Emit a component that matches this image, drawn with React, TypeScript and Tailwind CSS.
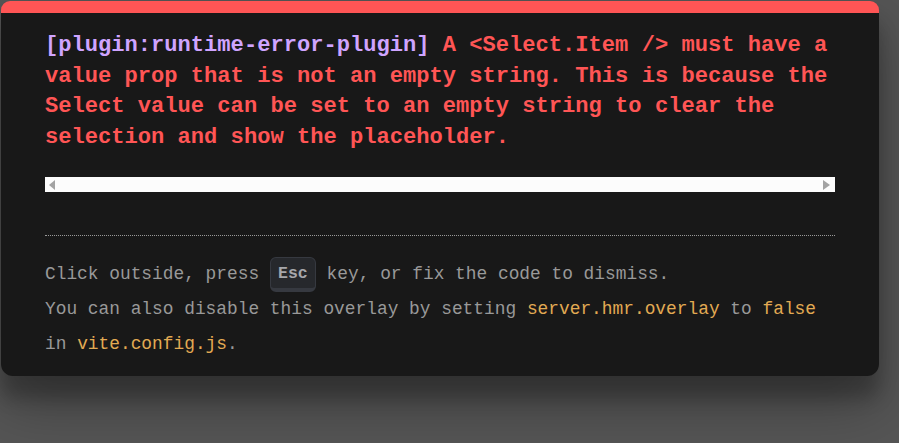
import React from "react";

const mono = "font-['Liberation_Mono','DejaVu_Sans_Mono',monospace]";

function Scrollbar() {
  return (
    <div className="mt-[24px] flex h-[15px] items-center justify-between bg-[#fcfcfc] pl-[4px] pr-[5px]">
      <svg width="6" height="10" viewBox="0 0 6 10">
        <path d="M6 0 L6 10 L0 5 Z" fill="#a3a3a3" />
      </svg>
      <svg width="7" height="10" viewBox="0 0 7 10">
        <path d="M0 0 L0 10 L7 5 Z" fill="#a3a3a3" />
      </svg>
    </div>
  );
}

export default function App() {
  const lines = [
    "A <Select.Item /> must have a",
    "value prop that is not an empty string. This is because the",
    "Select value can be set to an empty string to clear the",
    "selection and show the placeholder.",
  ];

  return (
    <div className="h-[443px] w-[899px] overflow-hidden bg-[#555555] pt-[1px]">
      <div
        className={`ml-[1px] w-[878px] overflow-hidden rounded-t-[9px] rounded-b-[12px] border-t-[12px] border-[#ff5555] bg-[#181818] px-[44px] pt-[18px] pb-[14px] text-[#d8d8d8] shadow-[0_28px_57px_rgba(0,0,0,0.3),0_22px_18px_rgba(0,0,0,0.22)] ${mono}`}
      >
        <pre className={`m-0 whitespace-pre text-[22.1px] font-bold leading-[30.5px] text-[#ff5555] ${mono}`}>
          <span className="text-[#cfa4ff]">[plugin:runtime-error-plugin]</span> {lines[0]}
          {"\n"}
          {lines[1]}
          {"\n"}
          {lines[2]}
          {"\n"}
          {lines[3]}
        </pre>

        <Scrollbar />

        <div className="mt-[43px] border-t border-dotted border-[#999999] pt-[21px] text-[17.85px] leading-[35px] text-[#999999]">
          <div className="whitespace-nowrap">
            Click outside, press{" "}
            <kbd
              className={`inline-flex h-[35px] w-[46px] items-center justify-center rounded-[6px] border-x-[1.5px] border-t-[1.5px] border-b-[4.5px] border-[#363940] bg-[#26282c] pt-[3px] align-middle text-[16.5px] font-bold leading-none text-[#a6a7ab] ${mono}`}
            >
              Esc
            </kbd>{" "}
            key, or fix the code to dismiss.
          </div>
          <div className="whitespace-nowrap">
            You can also disable this overlay by setting{" "}
            <code className={`text-[#e2aa53] ${mono}`}>server.hmr.overlay</code> to{" "}
            <code className={`text-[#e2aa53] ${mono}`}>false</code>
          </div>
          <div className="whitespace-nowrap">
            in <code className={`text-[#e2aa53] ${mono}`}>vite.config.js</code>.
          </div>
        </div>
      </div>
    </div>
  );
}
